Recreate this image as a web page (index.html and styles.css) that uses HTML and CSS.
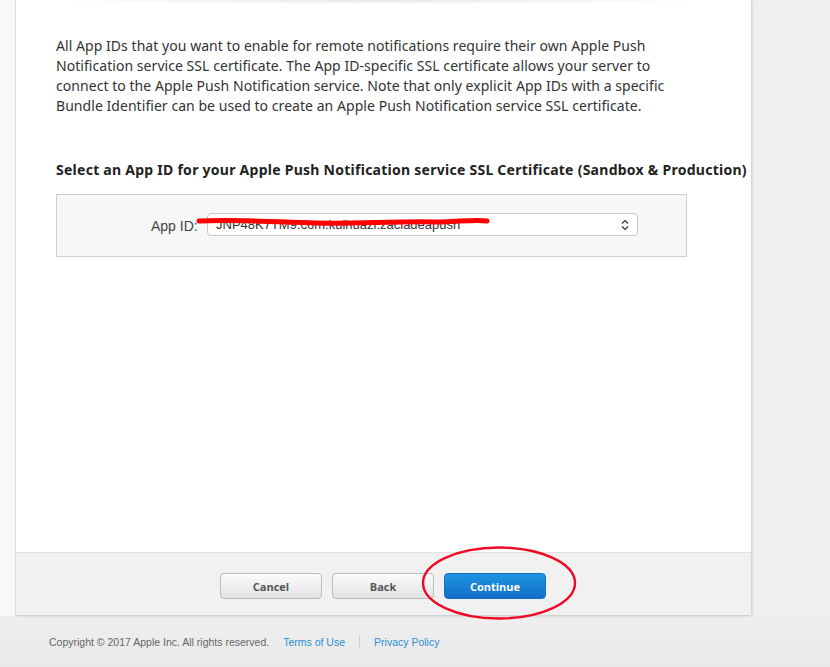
FILE: index.html
```html
<!DOCTYPE html>
<html>
<head>
<meta charset="utf-8">
<link rel="stylesheet" href="styles.css">
</head>
<body>
<div class="frame">
  <aside class="sidebar"></aside>
  <main class="panel">
    <div class="content">
      <p class="intro">All App IDs that you want to enable for remote notifications require their own Apple Push Notification service SSL certificate. The App ID-specific SSL certificate allows your server to connect to the Apple Push Notification service. Note that only explicit App IDs with a specific Bundle Identifier can be used to create an Apple Push Notification service SSL certificate.</p>
      <h2 class="heading">Select an App ID for your Apple Push Notification service SSL Certificate (Sandbox &amp; Production)</h2>
      <div class="formbox">
        <label class="label">App ID:</label>
        <div class="select">
          <span class="select-text">JNP48K7TM9.com.kuihuazi.zacladeapush</span>
          <svg class="arrows" width="8" height="12" viewBox="0 0 8 12"><path d="M1 4.5 L4 1.5 L7 4.5 M1 7.5 L4 10.5 L7 7.5" fill="none" stroke="#333" stroke-width="1.2"/></svg>
          <svg class="scribble" width="300" height="14" viewBox="0 0 300 14"><path d="M3 6 C40 4 80 7 120 8 C160 9 200 6 240 7 C260 7 280 4 291 6" fill="none" stroke="#ff0000" stroke-width="5" stroke-linecap="round"/></svg>
        </div>
      </div>
    </div>
    <div class="actions">
      <button class="btn">Cancel</button>
      <button class="btn">Back</button>
      <button class="btn primary">Continue</button>
      <svg class="circle" width="160" height="78" viewBox="0 0 160 78"><ellipse cx="79" cy="38" rx="76" ry="35.5" fill="none" stroke="#ee0a24" stroke-width="2.4"/></svg>
    </div>
  </main>
</div>
<footer class="footer">
  <span class="copy">Copyright © 2017 Apple Inc. All rights reserved.</span>
  <a class="link">Terms of Use</a>
  <span class="sep"></span>
  <a class="link">Privacy Policy</a>
</footer>
</body>
</html>
```
FILE: styles.css
```css
html, body { margin: 0; padding: 0; }
body {
  background: #efefef;
  width: 830px;
  height: 667px;
  overflow: hidden;
  font-family: "Noto Sans", sans-serif;
  position: relative;
}
.frame {
  display: flex;
  height: 616px;
  position: relative;
}
.frame::before {
  content: "";
  position: absolute;
  left: 30px;
  top: -6px;
  width: 700px;
  height: 10px;
  background: radial-gradient(ellipse at center, rgba(0,0,0,0.12), rgba(0,0,0,0) 70%);
}
.sidebar {
  width: 15px;
  background: #f8f9f9;
  border-right: 1px solid #dcdcdc;
}
.panel {
  width: 735px;
  display: flex;
  flex-direction: column;
  background: #fff;
  border-right: 1px solid #d6d6d6;
  border-bottom: 1px solid #d0d0d0;
  border-bottom-right-radius: 4px;
  box-shadow: 1px 1px 2px rgba(0,0,0,0.08);
}
.content {
  flex: 1;
  padding: 36px 0 0 40px;
}
.intro {
  margin: 0;
  width: 615px;
  font-size: 14px;
  line-height: 20px;
  letter-spacing: 0.05px;
  color: #333;
}
.heading {
  margin: 44px 0 0;
  font-size: 14px;
  font-weight: bold;
  line-height: 20px;
  letter-spacing: 0.26px;
  color: #222;
  white-space: nowrap;
}
.formbox {
  margin-top: 14px;
  width: 631px;
  height: 63px;
  box-sizing: border-box;
  background: #f6f7f7;
  border: 1px solid #cfcfcf;
  display: flex;
  align-items: center;
  padding-left: 94px;
}
.label {
  font-family: "Liberation Sans", sans-serif;
  font-size: 14px;
  color: #444;
  width: 56px;
}
.select {
  position: relative;
  width: 431px;
  height: 23px;
  margin-top: -2px;
  box-sizing: border-box;
  background: #fff;
  border: 1px solid #c8c8c8;
  border-radius: 4px;
  display: flex;
  align-items: center;
  padding: 0 8px 0 8px;
}
.select-text {
  flex: 1;
  font-family: "Liberation Sans", sans-serif;
  font-size: 13px;
  color: #333;
}
.arrows { display: block; }
.scribble {
  position: absolute;
  left: -12px;
  top: 1px;
}
.actions {
  position: relative;
  height: 62px;
  background: #f1f1f1;
  border-top: 1px solid #e0e0e0;
  display: flex;
  align-items: center;
  gap: 10px;
  padding-left: 204px;
  border-bottom-right-radius: 4px;
}
.btn {
  width: 102px;
  height: 26px;
  margin-top: 4px;
  border: 1px solid #bdbdbd;
  border-radius: 4px;
  background: linear-gradient(#fbfbfb, #e3e3e3);
  font-family: "Open Sans", sans-serif;
  font-size: 11px;
  font-weight: bold;
  color: #555;
  padding: 0;
}
.btn.primary {
  background: linear-gradient(#1f95e2, #116fc7);
  border-color: #1170c2;
  color: #fff;
}
.circle {
  position: absolute;
  left: 404px;
  top: -8px;
}
.footer {
  height: 51px;
  display: flex;
  align-items: center;
  padding-left: 49px;
  font-family: "Liberation Sans", sans-serif;
  font-size: 10.5px;
  background: linear-gradient(#efefef, #e9e9e9);
}
.copy { color: #666; }
.link { color: #2b8ed4; }
.copy + .link { margin-left: 14px; }
.sep {
  width: 1px;
  height: 14px;
  background: #d0d0d0;
  margin: 0 14px;
}
```
